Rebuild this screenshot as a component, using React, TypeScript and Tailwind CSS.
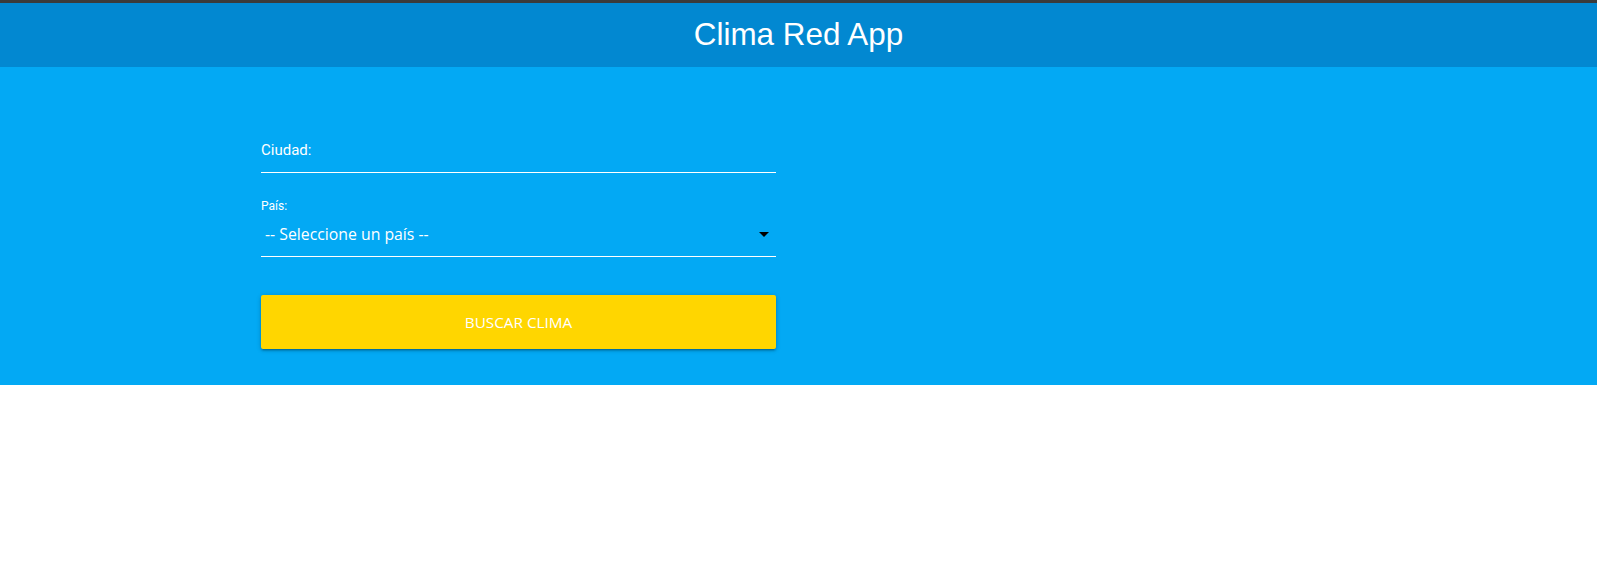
export default function App() {
    return (
        <div className="min-h-screen bg-white">
            <header className="flex h-[67px] items-center justify-center border-t-[3px] border-t-[#3b3b3b] bg-[#0288d1]">
                <h1 className="font-['Liberation_Sans',Arial,sans-serif] text-[31.4px] leading-none text-white">
                    Clima Red App
                </h1>
            </header>
            <section className="bg-[#03a9f4] pt-[62px] pb-[36px]">
                <form className="ml-[261px] flex w-[515px] flex-col">
                    <div className="flex h-[44px] items-center border-b border-white font-['Roboto',sans-serif] text-[15px] text-white">
                        Ciudad:
                    </div>
                    <label className="mt-[26px] h-[14px] font-['Roboto',sans-serif] text-[12px] leading-[14px] text-white">
                        País:
                    </label>
                    <div className="flex h-[44px] items-center justify-between border-b border-white pr-[7px] pl-[4px] font-['Open_Sans',sans-serif] text-[15.8px] text-white">
                        <span>-- Seleccione un país --</span>
                        <svg width="10" height="5" viewBox="0 0 10 5">
                            <path d="M0 0 L10 0 L5 5 Z" fill="#000" />
                        </svg>
                    </div>
                    <button
                        type="button"
                        className="mt-[38px] h-[54px] w-full rounded-[2px] bg-[#ffd600] font-['Open_Sans',sans-serif] text-[15.3px] text-white uppercase shadow-[0_2px_2px_0_rgba(0,0,0,0.14),0_3px_1px_-2px_rgba(0,0,0,0.12),0_1px_5px_0_rgba(0,0,0,0.2)]"
                    >
                        Buscar clima
                    </button>
                </form>
            </section>
        </div>
    )
}
